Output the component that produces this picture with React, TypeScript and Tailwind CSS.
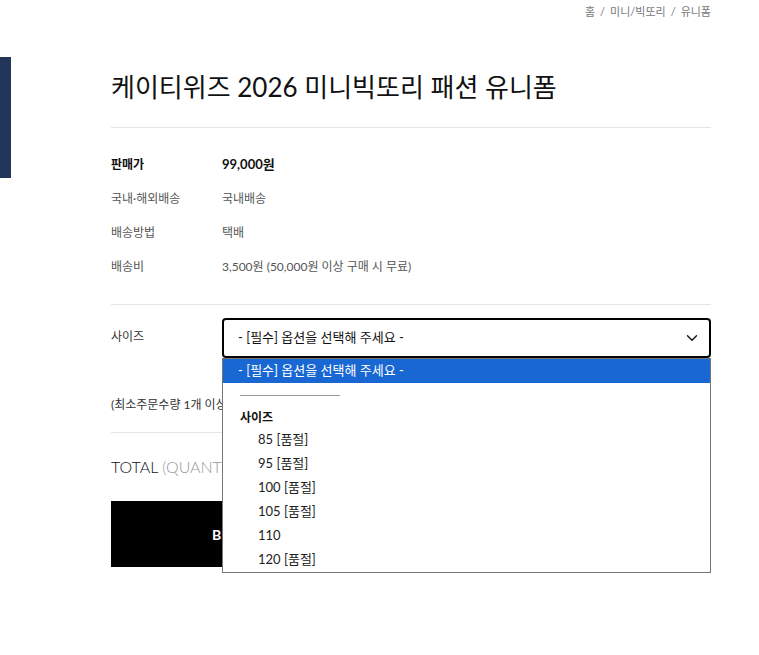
import { ChevronDown } from 'lucide-react';

const infoRows = [
  { label: '판매가', value: '99,000원', strong: true },
  { label: '국내·해외배송', value: '국내배송' },
  { label: '배송방법', value: '택배' },
  { label: '배송비', value: '3,500원 (50,000원 이상 구매 시 무료)' },
];

const sizes = ['85 [품절]', '95 [품절]', '100 [품절]', '105 [품절]', '110', '120 [품절]'];

export default function App() {
  return (
    <div
      className="relative min-h-[655px] w-full bg-white text-[#222]"
      style={{ fontFamily: '"Lato", "Noto Sans CJK KR", sans-serif' }}
    >
      {/* side tab */}
      <div className="absolute left-0 top-[57px] h-[121px] w-[11px] bg-[#233559]" />

      <div className="ml-[111px] w-[600px]">
        <div className="flex justify-end gap-[5px] pt-[4px] text-[11px] leading-[16px] text-[#777]">
          <span>홈</span>
          <span>/</span>
          <span>미니/빅또리</span>
          <span>/</span>
          <span>유니폼</span>
        </div>

        <div className="border-b border-[#e5e5e5] pb-[20px] pt-[47px]">
          <h1 className="text-[26px] font-normal leading-[40px] text-[#111]">
            케이티위즈 2026 미니빅또리 패션 유니폼
          </h1>
        </div>

        <div className="border-b border-[#e5e5e5] pb-[20px] pt-[20px]">
          {infoRows.map((row) => (
            <div key={row.label} className="flex h-[34px] items-center text-[12px]">
              <div
                className={
                  row.strong ? 'w-[111px] font-bold text-[#111]' : 'w-[111px] text-[#555]'
                }
              >
                {row.label}
              </div>
              <div className={row.strong ? 'text-[13px] font-bold text-[#111]' : 'text-[#555]'}>
                {row.value}
              </div>
            </div>
          ))}
        </div>

        <div className="relative border-b border-[#e5e5e5] pb-[17px] pt-[13px]">
          <div className="flex items-start">
            <div className="w-[111px] pt-[10px] text-[12px] leading-[18px] text-[#333]">사이즈</div>
            <div className="flex h-[40px] w-[489px] items-center justify-between rounded-[4px] border-2 border-black pl-[14px] pr-[8px] text-[13px] text-[#111]">
              <span>- [필수] 옵션을 선택해 주세요 -</span>
              <ChevronDown size={18} strokeWidth={1.8} />
            </div>
          </div>

          <p className="mt-[37px] text-[12px] leading-[20px] text-[#333]">
            (최소주문수량 1개 이상 / 최대주문수량 제한 없음)
          </p>

          {/* open select list, lies over the content below */}
          <div className="absolute left-[111px] top-[53px] z-10 w-[489px] border border-[#767676] bg-white text-[13px] text-[#222]">
            <div className="flex h-[24px] items-center bg-[#1967d2] pl-[15px] text-white">
              - [필수] 옵션을 선택해 주세요 -
            </div>
            <div className="flex h-[25px] items-center pl-[17px]">
              <div className="h-px w-[100px] bg-[#999]" />
            </div>
            <div className="flex h-[20px] items-center pl-[17px] text-[12px] font-bold text-[#111]">
              사이즈
            </div>
            {sizes.map((size) => (
              <div key={size} className="flex h-[24px] items-center pl-[35px]">
                {size}
              </div>
            ))}
          </div>
        </div>

        <div className="pt-[22px] text-[16px] font-light leading-[24px] text-[#111]">
          TOTAL <span className="text-[#999]">(QUANTITY)</span>
        </div>

        <div className="mt-[22px] flex gap-[10px]">
          <button className="flex h-[66px] w-[270px] items-center justify-center bg-black text-[14px] font-bold text-white">
            BUY NOW
          </button>
          <button className="flex h-[66px] flex-1 items-center justify-center border border-[#ccc] bg-white text-[14px] font-bold text-[#111]">
            CART
          </button>
        </div>
      </div>
    </div>
  );
}
